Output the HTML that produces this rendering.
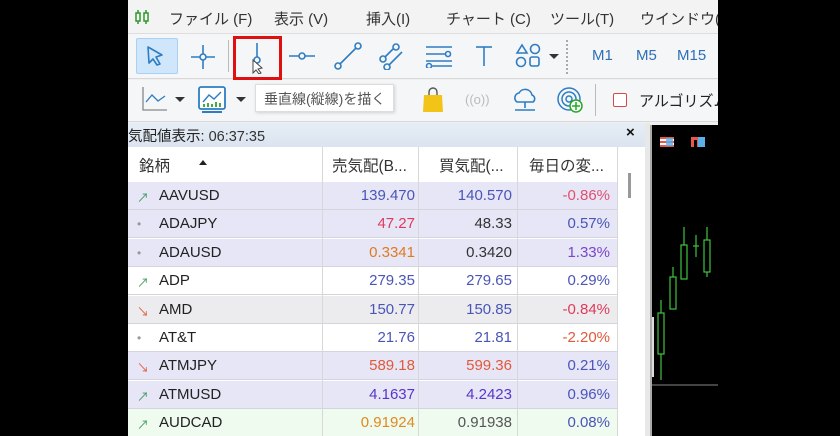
<!DOCTYPE html>
<html><head><meta charset="utf-8"><style>
*{margin:0;padding:0;box-sizing:border-box}
body{width:840px;height:436px;background:#000;position:relative;overflow:hidden;font-family:"Liberation Sans","Noto Sans CJK JP",sans-serif;color:#333}
#app{position:absolute;left:128px;top:0;width:590px;height:436px;background:#f0f0f0;overflow:hidden}
.abs{position:absolute}
.menu span{position:absolute;top:8px;font-size:15px;color:#333;white-space:nowrap}
.tb{position:absolute;left:0;width:590px;background:#f5f6f7;border-bottom:1px solid #d8d8d8}
.row{position:absolute;left:0;width:489px;height:28px;border-bottom:1px solid #d4d4dc;font-size:15px}
.row div{position:absolute;top:5px}
.sym{left:31px;color:#222}
.ic{left:9px;font-size:12px;top:7px!important}
.b{right:202px}.a{right:105px}.c{right:7px}
.col{position:absolute;top:147px;bottom:0;width:1px;background:#d8d8d8}
</style></head><body>
<div id="app">
<div class="abs" style="left:0;top:0;width:590px;height:34px;background:#f3f3f3;border-bottom:1px solid #ddd"></div>
<svg class="abs" style="left:6px;top:9px" width="16" height="16"><g stroke="#2a9a2a" stroke-width="1.5" fill="none"><line x1="4" y1="1" x2="4" y2="15"/><rect x="2" y="4" width="4" height="8" fill="#fff"/><line x1="12" y1="1" x2="12" y2="15"/><rect x="10" y="4" width="4" height="8" fill="#fff"/></g></svg>
<div class="menu"><span style="left:41px">ファイル (F)</span><span style="left:146px">表示 (V)</span><span style="left:238px">挿入(I)</span><span style="left:318px">チャート (C)</span><span style="left:422px">ツール(T)</span><span style="left:512px">ウインドウ(W)</span></div>
<div class="tb" style="top:34px;height:45px"></div>
<div class="abs" style="left:8px;top:38px;width:42px;height:36px;background:#cfe6fb;border:1px solid #a9d0f5;border-radius:2px"></div>
<svg class="abs" style="left:16px;top:44px" width="24" height="24"><path d="M4 3 L18 11 L12 13 L16 20 L13 21 L9 15 L5 19 Z" fill="none" stroke="#2e7dc4" stroke-width="1.6" stroke-linejoin="round"/></svg>
<svg class="abs" style="left:62px;top:44px" width="26" height="26"><g stroke="#2e7dc4" stroke-width="1.6" fill="none"><line x1="13" y1="1" x2="13" y2="25"/><line x1="1" y1="13" x2="25" y2="13"/><circle cx="13" cy="13" r="3" fill="#f5f6f7"/></g></svg>
<div class="abs" style="left:100px;top:40px;width:1px;height:32px;background:#bbb"></div>
<div class="abs" style="left:105px;top:36px;width:49px;height:44px;border:3px solid #e01010"></div>
<svg class="abs" style="left:118px;top:40px" width="24" height="34"><g stroke="#2e7dc4" stroke-width="1.6" fill="none"><line x1="11" y1="3" x2="11" y2="25"/><circle cx="11" cy="20" r="3" fill="#f5f6f7"/></g><path d="M7 20 L7 33 L10 30 L13 34 L15 33 L12 29 L16 28 Z" fill="#fff" stroke="#444" stroke-width="1"/></svg>
<svg class="abs" style="left:160px;top:44px" width="28" height="24"><g stroke="#2e7dc4" stroke-width="1.6" fill="none"><line x1="1" y1="12" x2="27" y2="12"/><circle cx="14" cy="12" r="3" fill="#f5f6f7"/></g></svg>
<svg class="abs" style="left:206px;top:42px" width="28" height="28"><g stroke="#2e7dc4" stroke-width="1.6" fill="#f5f6f7"><line x1="4" y1="24" x2="24" y2="4"/><circle cx="4" cy="24" r="3"/><circle cx="24" cy="4" r="3"/></g></svg>
<svg class="abs" style="left:250px;top:42px" width="28" height="28"><g stroke="#2e7dc4" stroke-width="1.6" fill="#f5f6f7"><line x1="4" y1="18" x2="16" y2="6"/><line x1="10" y1="24" x2="24" y2="10"/><circle cx="18" cy="5" r="3"/><circle cx="5" cy="17" r="3"/><circle cx="9" cy="25" r="3"/></g></svg>
<svg class="abs" style="left:296px;top:44px" width="30" height="24"><g stroke="#2e7dc4" stroke-width="1.6" fill="#f5f6f7"><line x1="2" y1="3" x2="28" y2="3"/><line x1="2" y1="10" x2="22" y2="10"/><line x1="2" y1="17" x2="28" y2="17"/><circle cx="24" cy="10" r="2.5"/><circle cx="5" cy="22" r="2.5"/><line x1="8" y1="22" x2="28" y2="22"/></g></svg>
<svg class="abs" style="left:346px;top:44px" width="20" height="24"><g stroke="#2e7dc4" stroke-width="1.6"><line x1="2" y1="3" x2="18" y2="3"/><line x1="10" y1="3" x2="10" y2="22"/></g></svg>
<svg class="abs" style="left:386px;top:42px" width="28" height="28"><g stroke="#2e7dc4" stroke-width="1.6" fill="none"><path d="M3 11 L8 3 L13 11 Z"/><circle cx="21" cy="7" r="4.5"/><circle cx="7" cy="20" r="4.5"/><rect x="16" y="15" width="9" height="9" rx="2"/></g></svg>
<div class="abs" style="left:421px;top:54px;border:5px solid transparent;border-top-color:#333"></div>
<div class="abs" style="left:438px;top:40px;width:1px;height:34px;border-left:2px dotted #aaa"></div>
<div class="abs" style="left:464px;top:47px;font-size:15px;color:#2e6fb8">M1</div>
<div class="abs" style="left:508px;top:47px;font-size:15px;color:#2e6fb8">M5</div>
<div class="abs" style="left:549px;top:47px;font-size:15px;color:#2e6fb8">M15</div>
<div class="tb" style="top:80px;height:42px"></div>
<svg class="abs" style="left:14px;top:86px" width="26" height="26"><g stroke="#2e7dc4" stroke-width="1.3" fill="none"><path d="M1 1 V24 H25" stroke="#888"/><path d="M4 16 L10 9 L16 15 L23 10"/></g></svg>
<div class="abs" style="left:47px;top:97px;border:5px solid transparent;border-top-color:#333"></div>
<svg class="abs" style="left:70px;top:86px" width="28" height="28"><rect x="1" y="1" width="26" height="22" rx="2" fill="#fff" stroke="#2e7dc4" stroke-width="1.8"/><path d="M5 16 L11 9 L16 13 L23 6" stroke="#2e7dc4" stroke-width="1.4" fill="none"/><g fill="#4a4"><rect x="5" y="18" width="2" height="3"/><rect x="9" y="17" width="2" height="4"/><rect x="13" y="18" width="2" height="3"/><rect x="17" y="16" width="2" height="5"/><rect x="21" y="17" width="2" height="4"/></g><rect x="4" y="25" width="20" height="2" fill="#2e7dc4"/></svg>
<div class="abs" style="left:108px;top:97px;border:5px solid transparent;border-top-color:#333"></div>
<div class="abs" style="left:127px;top:84px;height:28px;padding:4px 8px;background:#fff;border:1px solid #ddd;font-size:14px;color:#555;box-shadow:1px 1px 3px rgba(0,0,0,.15)">垂直線(縦線)を描く</div>
<svg class="abs" style="left:294px;top:86px" width="22" height="28"><path d="M7 10 V6 a4 4 0 0 1 8 0 V10" stroke="#555" stroke-width="1.4" fill="none"/><path d="M2 9 H20 L21 26 H1 Z" fill="#f2c418"/></svg>
<div class="abs" style="left:337px;top:92px;font-size:13px;color:#bbb">((o))</div>
<svg class="abs" style="left:383px;top:88px" width="28" height="26"><path d="M6 14 a5 5 0 0 1 2-9 a7 7 0 0 1 13 2 a4 4 0 0 1 1 7 Z" fill="none" stroke="#2e7dc4" stroke-width="1.6"/><path d="M14 14 V20 M4 22 H24" stroke="#2e7dc4" stroke-width="1.6"/></svg>
<svg class="abs" style="left:428px;top:86px" width="30" height="28"><g fill="none" stroke="#2e7dc4" stroke-width="1.5"><circle cx="13" cy="13" r="11"/><circle cx="13" cy="13" r="7"/><circle cx="13" cy="13" r="3"/></g><circle cx="20" cy="20" r="6" fill="#fff" stroke="#2a2" stroke-width="1.5"/><path d="M20 16 V24 M16 20 H24" stroke="#2a2" stroke-width="1.5"/></svg>
<div class="abs" style="left:467px;top:84px;width:1px;height:32px;background:#bbb"></div>
<div class="abs" style="left:485px;top:93px;width:14px;height:14px;border:1.5px solid #d84848;border-radius:2px;background:#fff"></div>
<div class="abs" style="left:511px;top:90px;font-size:15px;color:#222;white-space:nowrap">アルゴリズム取引</div>
<div class="abs" style="left:0;top:123px;width:517px;height:24px;background:linear-gradient(#e6edf6,#dbe4ef)"></div>
<div class="abs" style="left:0;top:125px;font-size:14.5px;color:#222">気配値表示: <span style="color:#333">06:37:35</span></div>
<div class="abs" style="left:498px;top:124px;font-size:15px;font-weight:bold;color:#111">×</div>
<div class="abs" style="left:0;top:147px;width:517px;height:289px;background:#fff"></div>
<div class="abs" style="left:11px;top:154px;font-size:15.5px;color:#333">銘柄</div>
<div class="abs" style="left:71px;top:160px;border:4px solid transparent;border-bottom:5px solid #222;border-top:0"></div>
<div class="abs" style="left:204px;top:154px;font-size:15.5px;color:#333">売気配(B...</div>
<div class="abs" style="left:311px;top:154px;font-size:15.5px;color:#333">買気配(...</div>
<div class="abs" style="left:401px;top:154px;font-size:15.5px;color:#333">毎日の変...</div>
<div id="rows"></div>
<div class="col" style="left:194px"></div><div class="col" style="left:290px"></div><div class="col" style="left:389px"></div><div class="col" style="left:489px"></div>
<div class="abs" style="left:500px;top:173px;width:3px;height:25px;background:#999"></div>
<div class="abs" style="left:517px;top:123px;width:5px;height:313px;background:#e8e8e8"></div>
<div class="abs" style="left:522px;top:125px;width:68px;height:311px;background:#000;border-left:2px solid #aaa"></div>
<svg class="abs" style="left:524px;top:127px" width="66" height="309">
<rect x="8" y="10" width="14" height="10" fill="#e8584a"/><rect x="8" y="12" width="14" height="2" fill="#fff"/><rect x="8" y="16" width="14" height="2" fill="#fff"/><rect x="14" y="11" width="7" height="8" fill="#5ab0e8" opacity=".8"/>
<rect x="39" y="10" width="14" height="10" fill="#e8584a"/><rect x="46" y="10" width="7" height="10" fill="#5ab0e8"/><rect x="42" y="13" width="3" height="7" fill="#000"/>
<g stroke="#3ec43e" stroke-width="1.2" fill="#000"><line x1="9" y1="173" x2="9" y2="253"/><rect x="6" y="186" width="6" height="41"/><line x1="21" y1="140" x2="21" y2="182"/><rect x="18" y="150" width="6" height="32"/><line x1="32" y1="100" x2="32" y2="150"/><rect x="29" y="118" width="6" height="34"/><line x1="44" y1="108" x2="44" y2="130"/><line x1="41" y1="119" x2="47" y2="119"/><line x1="55" y1="100" x2="55" y2="150"/><rect x="52" y="113" width="6" height="32"/></g>
<line x1="0" y1="258" x2="66" y2="258" stroke="#888"/>
<rect x="0" y="190" width="2" height="60" fill="#ddd"/>
</svg>
</div>
<script>
var d=[["↗","#3a9a5a","AAVUSD","139.470","#4a55b8","140.570","#4a55b8","-0.86%","#e05070","#e6e6f6"],
["•","#999","ADAJPY","47.27","#e03a5a","48.33","#333","0.57%","#4a55b8","#e6e6f6"],
["•","#999","ADAUSD","0.3341","#e07a20","0.3420","#333","1.33%","#7a45c8","#e6e6f6"],
["↗","#3a9a5a","ADP","279.35","#4a55b8","279.65","#4a55b8","0.29%","#4a55b8","#ffffff"],
["↘","#e05a3a","AMD","150.77","#4a55b8","150.85","#4a55b8","-0.84%","#e03a5a","#ececef"],
["•","#999","AT&amp;T","21.76","#4a55b8","21.81","#4a55b8","-2.20%","#e05a3a","#ffffff"],
["↘","#e05a3a","ATMJPY","589.18","#e05a3a","599.36","#e05a3a","0.21%","#4a55b8","#e6e6f6"],
["↗","#3a9a5a","ATMUSD","4.1637","#5a35c8","4.2423","#5a35c8","0.96%","#4a55b8","#e6e6f6"],
["↗","#3a9a5a","AUDCAD","0.91924","#e08a20","0.91938","#555","0.08%","#4a55b8","#eefbee"]];
var h="";d.forEach(function(r,i){h+='<div class="row" style="top:'+(182+i*28.4)+'px;background:'+r[9]+'"><div class="ic" style="color:'+r[1]+'">'+r[0]+'</div><div class="sym">'+r[2]+'</div><div class="b" style="color:'+r[4]+'">'+r[3]+'</div><div class="a" style="color:'+r[6]+'">'+r[5]+'</div><div class="c" style="color:'+r[8]+'">'+r[7]+'</div></div>';});
document.getElementById("rows").innerHTML=h;
</script>
</body></html>
